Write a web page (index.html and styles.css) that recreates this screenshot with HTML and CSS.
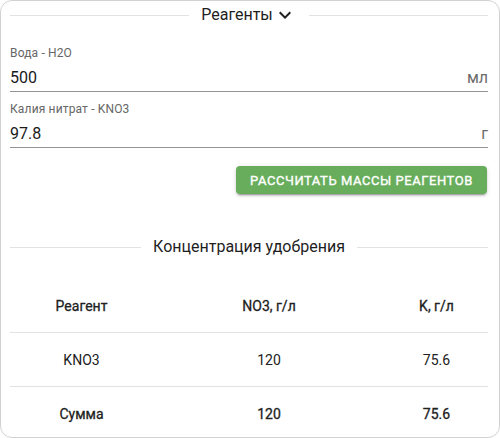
FILE: index.html
```html
<!DOCTYPE html>
<html lang="ru">
<head>
<meta charset="utf-8">
<link rel="stylesheet" href="styles.css">
</head>
<body>
<div class="card">
  <div class="divider-title top">
    <span class="line"></span>
    <span class="title">Реагенты</span>
    <svg class="chev" width="24" height="24" viewBox="0 0 24 24"><path d="M16.59 8.59 12 13.17 7.41 8.59 6 10l6 6 6-6z" fill="#222"/></svg>
    <span class="line"></span>
  </div>

  <div class="field first">
    <div class="label">Вода - H2O</div>
    <div class="input"><span class="value">500</span><span class="unit">мл</span></div>
  </div>
  <div class="field">
    <div class="label">Калия нитрат - KNO3</div>
    <div class="input"><span class="value">97.8</span><span class="unit">г</span></div>
  </div>

  <div class="actions">
    <button class="btn">Рассчитать массы реагентов</button>
  </div>

  <div class="divider-title second">
    <span class="line"></span>
    <span class="title">Концентрация удобрения</span>
    <span class="line"></span>
  </div>

  <div class="table">
    <div class="row head"><div>Реагент</div><div>NO3, г/л</div><div>K, г/л</div></div>
    <div class="row"><div>KNO3</div><div>120</div><div>75.6</div></div>
    <div class="row total"><div>Сумма</div><div>120</div><div>75.6</div></div>
  </div>
</div>
</body>
</html>
```
FILE: styles.css
```css
* { box-sizing: border-box; }
html, body { margin: 0; padding: 0; background: #fff; }
body { font-family: Roboto, "Noto Sans", sans-serif; color: #212121; }

.card {
  width: 500px;
  height: 438px;
  border: 1px solid #d2d2d2;
  border-radius: 12px;
  padding: 0 11px 0 9px;
  overflow: hidden;
}

.divider-title {
  display: flex;
  align-items: center;
  height: 28px;
}
.divider-title .line {
  flex: 1;
  height: 1px;
  background: #e2e2e2;
}
.divider-title .title {
  font-size: 16px;
  line-height: 20px;
  margin-left: 12px;
  color: #1e1e1e;
}
.divider-title .chev { margin-right: 12px; display: block; }
.divider-title.second .title { margin-right: 12px; }
.divider-title.second { margin-top: 39px; }

.field { margin-top: 10px; }
.field.first { margin-top: 17px; }
.label {
  font-size: 12px;
  line-height: 14px;
  color: #666;
  letter-spacing: 0.15px;
}
.input {
  display: flex;
  justify-content: space-between;
  align-items: center;
  margin-top: 6px;
  height: 26px;
  padding-bottom: 2px;
  border-bottom: 1px solid #949494;
  font-size: 16px;
  line-height: 23px;
}
.value { color: #1a1a1a; }
.unit { color: #6b6b6b; }

.actions {
  display: flex;
  justify-content: flex-end;
  margin-top: 18px;
}
.btn {
  font-family: Roboto, sans-serif;
  font-weight: 400;
  -webkit-text-stroke: 0.35px #fff;
  font-size: 13px;
  letter-spacing: 0.55px;
  text-transform: uppercase;
  color: #fff;
  background: #67ad5b;
  border: none;
  border-radius: 4px;
  height: 28px;
  width: 251px;
  padding: 0;
  margin-right: 1px;
  box-shadow: 0 3px 1px -2px rgba(0,0,0,0.2), 0 2px 2px 0 rgba(0,0,0,0.14), 0 1px 5px 0 rgba(0,0,0,0.12);
}

.table { margin-top: 18px; }
.row {
  display: grid;
  grid-template-columns: 143px 232px 1fr;
  height: 54px;
  border-bottom: 1px solid #e2e2e2;
  align-items: center;
  font-size: 14px;
}
.row > div { text-align: center; }
.row.head, .row.total { -webkit-text-stroke: 0.3px #212121; }
.row.total { border-bottom: none; }
```
